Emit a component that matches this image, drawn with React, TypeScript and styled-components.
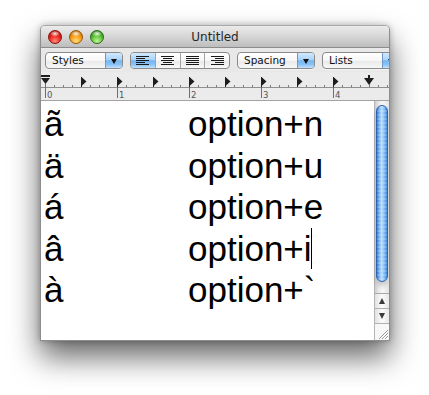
import React from 'react';
import styled, { createGlobalStyle, css } from 'styled-components';

// Reference: a TextEdit window (Leopard look) showing option-key accent shortcuts

const GlobalStyle = createGlobalStyle`
	html, body {
		margin: 0;
		padding: 0;
		background: #ffffff;
	}
	body {
		font-family: "DejaVu Sans", "Liberation Sans", sans-serif;
	}
`;

const uiFont = `"DejaVu Sans", "Liberation Sans", sans-serif`;

const rows: [string, string][] = [
	['ã', 'option+n'],
	['ä', 'option+u'],
	['á', 'option+e'],
	['â', 'option+i'],
	['à', 'option+`']
];

const CARET_ROW = 3;

const Stage = styled.div`
	width: 429px;
	height: 395px;
	padding: 25px 0 0 40px;
	box-sizing: border-box;
	overflow: hidden;
`;

const Window = styled.div`
	width: 350px;
	height: 316px;
	box-sizing: border-box;
	border: 1px solid #8d8d8d;
	border-top-color: #a9a9a9;
	border-radius: 5px 5px 0 0;
	display: flex;
	flex-direction: column;
	overflow: hidden;
	background: #ffffff;
	box-shadow: 0 0 6px rgba(0, 0, 0, 0.25), 0 16px 30px rgba(0, 0, 0, 0.6);
`;

const TitleBar = styled.div`
	height: 21px;
	flex-shrink: 0;
	display: grid;
	grid-template-columns: 1fr auto 1fr;
	align-items: center;
	background: linear-gradient(to bottom, #ebebeb 0%, #d6d6d6 50%, #bdbdbd 100%);
	border-bottom: 1px solid #8c8c8c;
`;

const Lights = styled.div`
	display: flex;
	gap: 7px;
	padding-left: 7px;
`;

const lightColors = {
	red: ['#ff8a7a', '#e8251b', '#8a0f08'],
	yellow: ['#ffe080', '#f79a12', '#9a5606'],
	green: ['#c4f7a0', '#58c030', '#266d10']
};

const Light = styled.span<{ $tone: keyof typeof lightColors }>`
	width: 14px;
	height: 14px;
	border-radius: 50%;
	box-sizing: border-box;
	${({ $tone }) => {
		const [hi, mid, dark] = lightColors[$tone];
		return css`
			border: 1px solid ${dark};
			background:
				radial-gradient(ellipse 55% 35% at 50% 22%, rgba(255, 255, 255, 0.9), rgba(255, 255, 255, 0) 75%),
				radial-gradient(circle at 50% 85%, ${hi} 0%, ${mid} 50%, ${dark} 100%);
		`;
	}}
`;

const Title = styled.div`
	font-family: ${uiFont};
	font-size: 12px;
	color: #262626;
	padding-top: 1px;
`;

const Toolbar = styled.div`
	height: 24px;
	flex-shrink: 0;
	display: flex;
	align-items: flex-start;
	gap: 7px;
	padding: 4px 0 0 4px;
	box-sizing: border-box;
	background: #e8e8e8;
	overflow: hidden;
`;

const aqua = css`
	background: linear-gradient(to bottom, #d3e9fd 0%, #a9d3fa 45%, #72b4f3 52%, #8fc6f7 80%, #c3e3fd 100%);
`;

const PopUp = styled.div`
	width: 78px;
	height: 17px;
	flex-shrink: 0;
	box-sizing: border-box;
	border: 1px solid #8a8a8a;
	border-radius: 4px;
	display: flex;
	overflow: hidden;
	background: linear-gradient(to bottom, #ffffff 0%, #f6f6f6 50%, #eaeaea 55%, #f7f7f7 100%);
	box-shadow: 0 1px 0 rgba(255, 255, 255, 0.6);
`;

const PopUpLabel = styled.span`
	flex: 1;
	font-family: ${uiFont};
	font-size: 10.5px;
	line-height: 15px;
	color: #111;
	padding-left: 6px;
`;

const PopUpArrow = styled.span`
	width: 16px;
	flex-shrink: 0;
	display: flex;
	align-items: center;
	justify-content: center;
	border-left: 1px solid #6f98c8;
	${aqua}
	&::after {
		content: '';
		border-left: 3px solid transparent;
		border-right: 3px solid transparent;
		border-top: 5px solid #141414;
		margin-top: 1px;
	}
`;

const Segmented = styled.div`
	width: 100px;
	height: 17px;
	flex-shrink: 0;
	box-sizing: border-box;
	border: 1px solid #8a8a8a;
	border-radius: 4px;
	display: flex;
	overflow: hidden;
	background: linear-gradient(to bottom, #ffffff 0%, #f6f6f6 50%, #eaeaea 55%, #f7f7f7 100%);
`;

const Segment = styled.span<{ $selected?: boolean }>`
	flex: 1;
	display: flex;
	align-items: center;
	justify-content: center;
	& + & {
		border-left: 1px solid #a4a4a4;
	}
	${({ $selected }) => $selected && aqua}
`;

type Align = 'left' | 'center' | 'justify' | 'right';

const AlignIcon = ({ align }: { align: Align }) => {
	const widths = [13, 9, 13, 9, 13];
	return (
		<svg width="13" height="9" viewBox="0 0 13 9">
			{widths.map((w, i) => {
				const len = align === 'justify' ? 13 : w;
				const x = align === 'left' || align === 'justify' ? 0 : align === 'right' ? 13 - len : (13 - len) / 2;
				return <rect key={i} x={x} y={i * 2} width={len} height={1} fill="#1a1a1a" />;
			})}
		</svg>
	);
};

const RulerBar = styled.div`
	height: 28px;
	flex-shrink: 0;
	background: #ebebeb;
	border-bottom: 1px solid #a3a3a3;
`;

const INCH = 72;
const ZERO = 4;

const Ruler = () => {
	const ticks = [];
	for (let i = 0; ZERO + i * 9 < 348; i++) {
		const x = ZERO + i * 9 + 0.5;
		if (i % 8 === 0) {
			ticks.push(<line key={`t${i}`} x1={x} y1={12} x2={x} y2={26} stroke="#6e6e6e" />);
			ticks.push(
				<text key={`n${i}`} x={x + 1.5} y={26} fontSize="8.5" fill="#555" fontFamily="DejaVu Sans, sans-serif">
					{i / 8}
				</text>
			);
		} else {
			ticks.push(<line key={`t${i}`} x1={x} y1={i % 4 === 0 ? 11 : 13} x2={x} y2={15} stroke="#7c7c7c" />);
		}
	}
	const tabs = [];
	for (let k = 1; k <= 8; k++) {
		const x = ZERO + k * INCH / 2 + 0.5;
		tabs.push(<path key={`tab${k}`} d={`M${x} 5 L${x + 5} 9.5 L${x} 14 Z`} fill="#1e1e1e" />);
		tabs.push(<line key={`ts${k}`} x1={x} y1={5} x2={x} y2={15} stroke="#1e1e1e" />);
	}
	const right = ZERO + 4.5 * INCH;
	return (
		<svg width="348" height="28" viewBox="0 0 348 28">
			<line x1="0" y1="15.5" x2="348" y2="15.5" stroke="#8e8e8e" />
			{ticks}
			{tabs}
			<rect x={ZERO - 4} y={3} width={9} height={2} fill="#1e1e1e" />
			<path d={`M${ZERO - 4} 6 L${ZERO + 5} 6 L${ZERO + 0.5} 12 Z`} fill="#1e1e1e" />
			<path d={`M${right - 5} 6 L${right + 5} 6 L${right} 13 Z`} fill="#1e1e1e" />
			<rect x={right - 1} y={3} width={2} height={4} fill="#1e1e1e" />
		</svg>
	);
};

const Body = styled.div`
	flex: 1;
	display: flex;
	min-height: 0;
`;

const Page = styled.div`
	flex: 1;
	padding: 2px 0 0 3px;
	display: grid;
	grid-template-columns: 144px auto;
	grid-auto-rows: 41.6px;
	align-content: start;
	font-family: "Liberation Sans", Arial, sans-serif;
	font-size: 35px;
	line-height: 41.6px;
	color: #000;
`;

const Cell = styled.div`
	white-space: nowrap;
`;

const Caret = styled.span`
	display: inline-block;
	width: 1px;
	height: 41px;
	background: #000;
	vertical-align: top;
	margin-left: -1px;
`;

const Scroller = styled.div`
	width: 15px;
	flex-shrink: 0;
	display: flex;
	flex-direction: column;
	border-left: 1px solid #b4b4b4;
	box-sizing: border-box;
`;

const Track = styled.div`
	flex: 1;
	padding: 4px 1px 0;
	background: linear-gradient(to right, #cfcfcf 0%, #ececec 30%, #f7f7f7 55%, #e4e4e4 100%);
	border-bottom: 1px solid #a8a8a8;
	box-sizing: border-box;
`;

const Thumb = styled.div`
	height: 177px;
	border-radius: 7px;
	border: 1px solid #2f62b0;
	box-sizing: border-box;
	background:
		repeating-linear-gradient(to bottom, rgba(255, 255, 255, 0.18) 0 2px, rgba(255, 255, 255, 0) 2px 4px),
		linear-gradient(to right, #2f74d6 0%, #7ebaf4 25%, #b6dcfc 45%, #9ed0fa 60%, #5ea6ee 85%, #3a7fd8 100%);
	box-shadow: 0 4px 5px rgba(0, 0, 0, 0.18);
`;

const ArrowButton = styled.div<{ $dir: 'up' | 'down' }>`
	height: 14px;
	flex-shrink: 0;
	display: flex;
	align-items: center;
	justify-content: center;
	background: linear-gradient(to right, #e2e2e2 0%, #fbfbfb 50%, #e8e8e8 100%);
	border-bottom: 1px solid #b0b0b0;
	&::after {
		content: '';
		border-left: 3.5px solid transparent;
		border-right: 3.5px solid transparent;
		${({ $dir }) => ($dir === 'up' ? 'border-bottom: 6px solid #3a3a3a;' : 'border-top: 6px solid #3a3a3a;')}
	}
`;

const Grip = styled.div`
	height: 16px;
	flex-shrink: 0;
	display: flex;
	align-items: flex-end;
	justify-content: flex-end;
	background: #f7f7f7;
`;

const GripLines = () => (
	<svg width="13" height="13" viewBox="0 0 13 13">
		<path d="M3 12 L12 3 M6 12 L12 6 M9 12 L12 9" stroke="#9a9a9a" strokeWidth="1" />
		<path d="M4 12 L12 4 M7 12 L12 7 M10 12 L12 10" stroke="#ffffff" strokeWidth="1" />
	</svg>
);

const App = () => {
	const alignments: Align[] = ['left', 'center', 'justify', 'right'];
	return (
		<>
			<GlobalStyle />
			<Stage>
				<Window>
					<TitleBar>
						<Lights>
							<Light $tone="red" />
							<Light $tone="yellow" />
							<Light $tone="green" />
						</Lights>
						<Title>Untitled</Title>
						<div />
					</TitleBar>
					<Toolbar>
						<PopUp>
							<PopUpLabel>Styles</PopUpLabel>
							<PopUpArrow />
						</PopUp>
						<Segmented>
							{alignments.map((a) => (
								<Segment key={a} $selected={a === 'left'}>
									<AlignIcon align={a} />
								</Segment>
							))}
						</Segmented>
						<PopUp>
							<PopUpLabel>Spacing</PopUpLabel>
							<PopUpArrow />
						</PopUp>
						<PopUp>
							<PopUpLabel>Lists</PopUpLabel>
							<PopUpArrow />
						</PopUp>
					</Toolbar>
					<RulerBar>
						<Ruler />
					</RulerBar>
					<Body>
						<Page>
							{rows.map(([accent, keys], i) => (
								<React.Fragment key={keys}>
									<Cell>{accent}</Cell>
									<Cell>
										{keys}
										{i === CARET_ROW ? <Caret /> : null}
									</Cell>
								</React.Fragment>
							))}
						</Page>
						<Scroller>
							<Track>
								<Thumb />
							</Track>
							<ArrowButton $dir="up" />
							<ArrowButton $dir="down" />
							<Grip>
								<GripLines />
							</Grip>
						</Scroller>
					</Body>
				</Window>
			</Stage>
		</>
	);
};

export default App;
